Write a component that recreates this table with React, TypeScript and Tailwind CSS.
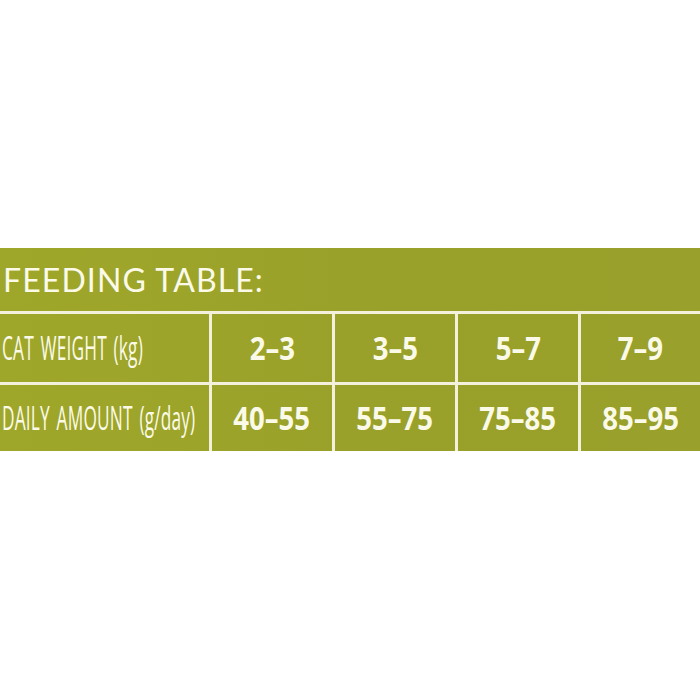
const weights = ['2–3', '3–5', '5–7', '7–9'];
const amounts = ['40–55', '55–75', '75–85', '85–95'];

const Label = ({ children }: { children: React.ReactNode }) => (
  <div className="flex items-center overflow-visible border-r-[3px] border-[#f3f1dc] pl-[2px]">
    <span className="inline-block origin-left scale-x-[0.54] whitespace-nowrap font-['Open_Sans',sans-serif] text-[32px] font-normal tracking-[0.01em] text-[#fbfae8] [word-spacing:0.12em]">
      {children}
    </span>
  </div>
);

const Cell = ({ value, last }: { value: string; last?: boolean }) => (
  <div
    className={
      'flex items-center justify-center ' + (last ? '' : 'border-r-[3px] border-[#f3f1dc]')
    }
  >
    <span className="inline-block scale-x-[0.86] whitespace-nowrap font-['Open_Sans',sans-serif] text-[32px] font-bold text-[#fbfae8]">
      {value}
    </span>
  </div>
);

export default function App() {
  return (
    <div className="h-[700px] w-[700px] bg-white pt-[248px]">
      <section className="bg-[#9ca22a] bg-linear-to-r from-[#9fa72a] via-[#9aa12a] to-[#99a02b]">
        <div className="flex h-[66px] items-center border-b-[3px] border-[#f3f1dc] pl-[3px] pt-[1px]">
          <h2 className="font-['Lato',sans-serif] text-[32px] font-normal tracking-[0.035em] text-[#fbfae8]">
            FEEDING TABLE:
          </h2>
        </div>
        <div className="grid h-[71px] grid-cols-[212px_123px_123px_123px_1fr] border-b-[3px] border-[#f3f1dc]">
          <Label>CAT WEIGHT (kg)</Label>
          {weights.map((w, i) => (
            <Cell key={w} value={w} last={i === weights.length - 1} />
          ))}
        </div>
        <div className="grid h-[66px] grid-cols-[212px_123px_123px_123px_1fr]">
          <Label>DAILY AMOUNT (g/day)</Label>
          {amounts.map((a, i) => (
            <Cell key={a} value={a} last={i === amounts.length - 1} />
          ))}
        </div>
      </section>
    </div>
  );
}
